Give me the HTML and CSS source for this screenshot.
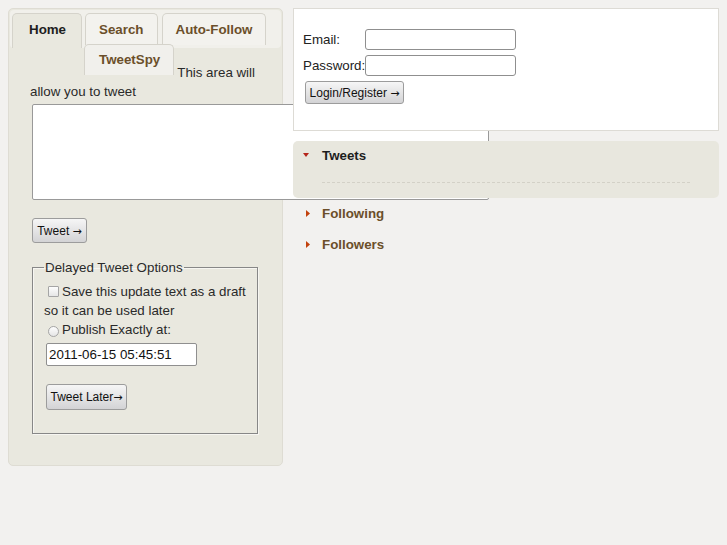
FILE: index.html
```html
<!DOCTYPE html>
<html>
<head>
<meta charset="utf-8">
<title>TweetSpy</title>
<link rel="stylesheet" href="styles.css">
</head>
<body>
<div class="page">
  <div class="left">
    <div class="panel">
      <div class="nav">
        <span class="tab active">Home</span>
        <span class="tab">Search</span>
        <span class="tab tab-af">Auto-Follow</span>
      </div>
      <div class="panel-body">
        <div class="row2"><span class="tab tab-spy">TweetSpy</span><span class="intro1">This area will</span></div>
        <div class="intro2">allow you to tweet</div>
        <textarea class="tweet-box"></textarea>
        <button class="btn btn-tweet">Tweet <span class="arr">→</span></button>
        <fieldset class="delayed">
          <legend>Delayed Tweet Options</legend>
          <div class="line"><input type="checkbox" class="chk"><span>Save this update text as a draft</span></div>
          <div class="line">so it can be used later</div>
          <div class="line"><input type="radio" class="rad"><span>Publish Exactly at:</span></div>
          <input type="text" class="date-input" value="2011-06-15 05:45:51">
          <button class="btn btn-later">Tweet Later<span class="arr">→</span></button>
        </fieldset>
      </div>
    </div>
  </div>
  <div class="right">
    <div class="login">
      <div class="login-grid">
        <label>Email:</label><input type="text" class="field">
        <label>Password:</label><input type="password" class="field">
      </div>
      <button class="btn btn-login">Login/Register <span class="arr">→</span></button>
    </div>
    <div class="accordion">
      <div class="acc-active">
        <div class="acc-head active-head">
          <svg class="tri-down" width="6" height="4" viewBox="0 0 6 4"><path d="M0 0H6L3 4Z" fill="#b5261b"/></svg>
          <span>Tweets</span>
        </div>
        <div class="acc-content"><div class="dash"></div></div>
      </div>
      <div class="acc-head">
        <svg class="tri-right" width="4" height="7" viewBox="0 0 4 7"><path d="M0 0L4 3.5L0 7Z" fill="#c2410c"/></svg>
        <span>Following</span>
      </div>
      <div class="acc-head">
        <svg class="tri-right" width="4" height="7" viewBox="0 0 4 7"><path d="M0 0L4 3.5L0 7Z" fill="#c2410c"/></svg>
        <span>Followers</span>
      </div>
    </div>
  </div>
</div>
</body>
</html>
```

FILE: styles.css
```css
html, body {
  margin: 0;
  padding: 0;
}
body {
  background: #f2f1ef;
  font-family: "Liberation Sans", Arial, sans-serif;
  font-size: 13.33px;
  color: #222;
}
.page {
  display: flex;
  align-items: flex-start;
  gap: 10px;
  padding: 8px;
}
.left {
  width: 275px;
  flex: none;
}
.panel {
  box-sizing: border-box;
  width: 275px;
  background: #e9e8df;
  border: 1px solid #dedcd3;
  border-radius: 5px;
  padding: 1px;
}
.nav {
  box-sizing: border-box;
  height: 38px;
  background: #f1f0eb;
  border-radius: 4px;
  padding: 3px 2px 0;
  display: flex;
  align-items: flex-start;
  gap: 3px;
}
.tab {
  display: block;
  box-sizing: border-box;
  height: 32px;
  line-height: 31px;
  padding: 0 13px;
  border: 1px solid #d5d3cb;
  border-bottom: none;
  border-radius: 5px 5px 0 0;
  background: #f3f2ee;
  font-weight: bold;
  font-size: 13.33px;
  color: #6b4f2a;
}
.tab.active {
  height: 35px;
  background: #e9e8df;
  color: #1e1e1e;
  padding: 0 15px 0 16px;
}
.tab-af {
  margin-left: 1px;
}
.panel-body {
  padding: 0 20px 30px;
}
.row2 {
  display: flex;
  align-items: flex-start;
  margin-top: -4px;
}
.tab-spy {
  height: 31px;
  line-height: 30px;
  margin-left: 54px;
  padding: 0 13px 0 14px;
  background: #f1f0ec;
}
.intro1 {
  margin-top: 19px;
  margin-left: 3px;
  line-height: 19px;
  color: #2a2a2a;
}
.intro2 {
  line-height: 19px;
  color: #2a2a2a;
}
.tweet-box {
  display: block;
  box-sizing: border-box;
  width: 457px;
  height: 96px;
  margin: 3px 0 0 2px;
  border: 1px solid #999;
  border-radius: 2px;
  background: #fff;
  padding: 2px;
  font-family: inherit;
}
.btn {
  display: block;
  box-sizing: border-box;
  border: 1px solid #9c9c9c;
  border-radius: 3px;
  background: linear-gradient(#f6f6f6, #d3d3d5);
  font-family: "Liberation Sans", Arial, sans-serif;
  font-size: 12px;
  color: #111;
  padding: 0;
  margin: 0;
  white-space: nowrap;
  text-align: center;
}
.arr {
  font-family: "DejaVu Sans", sans-serif;
  font-size: 11px;
}
.btn-tweet {
  margin: 18px 0 0 2px;
  height: 25px;
  width: 55px;
}
.delayed {
  box-sizing: border-box;
  width: 226px;
  margin: 15px 2px 0;
  border: 1px solid #878787;
  box-shadow: inset 1px 1px 0 #f7f6f2, 1px 1px 0 #f7f6f2;
  padding: 5px 10px 23px 11px;
}
.delayed legend {
  padding: 0 1px;
  line-height: 19px;
  color: #2a2a2a;
}
.line {
  line-height: 19px;
  color: #2a2a2a;
  display: flex;
  align-items: center;
}
.chk, .rad {
  appearance: none;
  -webkit-appearance: none;
  box-sizing: border-box;
  width: 11px;
  height: 11px;
  margin: 0 3px 0 4px;
  border: 1px solid #a5a5a5;
  background: linear-gradient(#fdfdfd, #e6e6e6);
}
.chk {
  border-radius: 1px;
}
.rad {
  border-radius: 50%;
  margin-top: 4px;
}
.date-input {
  display: block;
  box-sizing: border-box;
  width: 151px;
  height: 23px;
  margin: 4px 0 0 2px;
  border: 1px solid #8f8f8f;
  border-radius: 2px;
  padding: 0 2px;
  font-family: inherit;
  font-size: 13.33px;
  color: #111;
  background: #fff;
}
.btn-later {
  margin: 18px 0 0 2px;
  height: 26px;
  width: 81px;
}
.right {
  width: 426px;
  flex: none;
}
.login {
  box-sizing: border-box;
  height: 123px;
  background: #fff;
  border: 1px solid #dddbd5;
  padding: 20px 0 0 9px;
}
.login-grid {
  display: grid;
  grid-template-columns: 62px 151px;
  row-gap: 5px;
  align-items: center;
}
.login-grid label {
  color: #222;
  white-space: nowrap;
}
.field {
  box-sizing: border-box;
  width: 151px;
  height: 21px;
  border: 1px solid #8f8f8f;
  border-radius: 3px;
  background: #fff;
  margin: 0;
}
.btn-login {
  margin: 5px 0 0 2px;
  height: 23px;
  width: 99px;
}
.accordion {
  position: relative;
  margin-top: 10px;
}
.acc-active {
  background: #e8e7de;
  border-radius: 5px;
}
.acc-head {
  display: flex;
  align-items: center;
  height: 31px;
  padding-left: 10px;
  font-weight: bold;
  font-size: 13.33px;
  color: #6b4f2a;
}
.acc-head.active-head {
  height: 28px;
  color: #1d1d1d;
}
.tri-down {
  margin-right: 13px;
}
.tri-right {
  margin: 0 12px 0 3px;
}
.acc-content {
  height: 29px;
  padding: 0 29px;
}
.dash {
  height: 13px;
  border-bottom: 1px dashed #d3d1c7;
}
```
